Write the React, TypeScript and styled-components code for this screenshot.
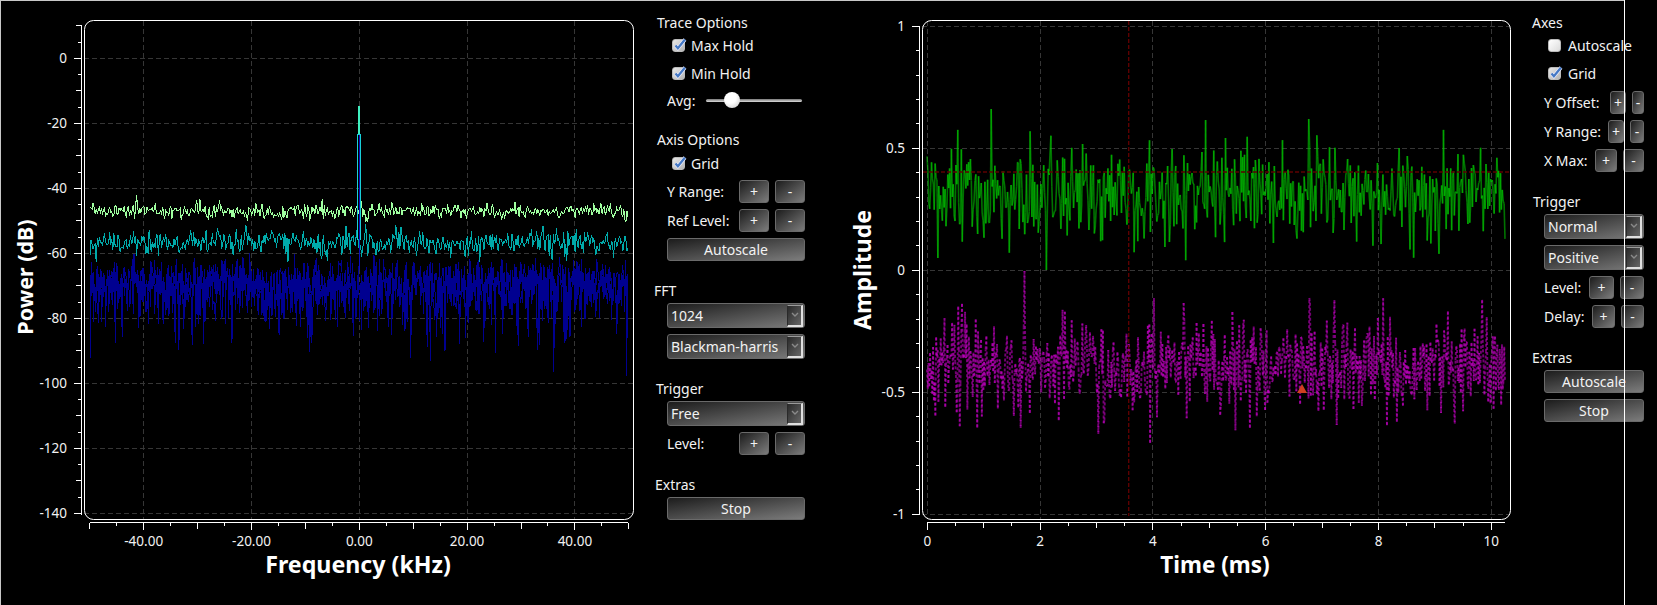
import React from "react";
import styled, { createGlobalStyle } from "styled-components";

const GlobalStyle = createGlobalStyle`
    html, body {
        margin: 0;
        background: #000;
    }
    body {
        font-family: "Noto Sans", "Open Sans", sans-serif;
        font-size: 14px;
        color: #f2f2f2;
    }
`;

const Window = styled.div`
    position: relative;
    display: flex;
    align-items: flex-start;
    width: 1657px;
    height: 605px;
    overflow: hidden;
    box-shadow: inset 1px 1px 0 #c8c8c8;

    &::after {
        content: "";
        position: absolute;
        left: 1624px;
        top: 0;
        bottom: 0;
        width: 1px;
        background: #fff;
    }
    &::before {
        content: "";
        position: absolute;
        left: 1625px;
        right: 0;
        top: 0;
        height: 1px;
        background: #000;
    }
`;

const ChartSvg = styled.svg`
    display: block;
    flex: none;
`;

const TickLabel = styled.text`
    font-size: 13.5px;
    fill: #f2f2f2;
`;

const AxisTitle = styled.text<{ $size: number }>`
    font-size: ${(p) => p.$size}px;
    font-weight: 700;
    fill: #fff;
`;

const Panel = styled.div<{ $w: number; $rowX: number }>`
    flex: none;
    display: flex;
    flex-direction: column;
    gap: 21px;
    width: ${(p) => p.$w}px;
    padding-top: 14px;
    --row-x: ${(p) => p.$rowX}px;
`;

const Group = styled.div<{ $rowW: number }>`
    display: flex;
    flex-direction: column;
    --row-w: ${(p) => p.$rowW}px;
`;

const GroupTitle = styled.div<{ $x: number }>`
    height: 18px;
    line-height: 18px;
    padding-left: ${(p) => p.$x}px;
    white-space: nowrap;
`;

const Row = styled.div<{ $mt?: number }>`
    display: flex;
    align-items: center;
    flex: none;
    gap: 6px;
    height: 23px;
    width: var(--row-w);
    margin-left: var(--row-x);
    margin-top: ${(p) => p.$mt ?? 6}px;
`;

const RowLabel = styled.span`
    flex: 1;
    white-space: nowrap;
`;

const Button = styled.button<{ $w?: number }>`
    flex: ${(p) => (p.$w ? "none" : "1")};
    width: ${(p) => (p.$w ? `${p.$w}px` : "auto")};
    height: 23px;
    padding: 0;
    border: 1px solid #6a6a6a;
    border-radius: 3px;
    background: linear-gradient(to bottom right, #1c1c1c, #7c7c7c);
    color: #f2f2f2;
    font: inherit;
    line-height: 19px;
`;

const ComboBox = styled.div<{ $mt?: number }>`
    display: flex;
    align-items: center;
    justify-content: space-between;
    flex: none;
    box-sizing: border-box;
    width: var(--row-w);
    height: 25px;
    margin-left: var(--row-x);
    margin-top: ${(p) => p.$mt ?? 6}px;
    padding: 0 1px 0 3px;
    border: 1px solid #6a6a6a;
    border-radius: 3px;
    background: linear-gradient(to bottom right, #1c1c1c, #7c7c7c);
`;

const ComboArrow = styled.span`
    display: flex;
    align-items: center;
    justify-content: center;
    box-sizing: border-box;
    width: 16px;
    height: 22px;
    border: 2px solid #e0e0e0;
    border-top: 1px solid #9a9a9a;
    border-left: 1px solid #2a2a2a;
    background: linear-gradient(to bottom right, #2a2a2a, #666);
`;

const CheckRow = styled.label<{ $mt?: number; $x: number; $gap: number }>`
    display: flex;
    align-items: center;
    flex: none;
    gap: ${(p) => p.$gap}px;
    height: 20px;
    margin-left: var(--row-x);
    margin-top: ${(p) => p.$mt ?? 8}px;
    padding-left: ${(p) => p.$x}px;
    white-space: nowrap;
`;

const CheckBox = styled.span<{ $on: boolean }>`
    position: relative;
    flex: none;
    box-sizing: border-box;
    width: 13px;
    height: 13px;
    border: 1px solid #bbb;
    border-radius: 3px;
    background: ${(p) => (p.$on ? "linear-gradient(to bottom right, #e8e8e8, #b4b4b4)" : "linear-gradient(to bottom right, #fff, #dcdcdc)")};
`;

const CheckMark = styled.svg`
    position: absolute;
    left: 0;
    top: -2px;
    overflow: visible;
`;

const SliderRow = styled.div`
    display: flex;
    align-items: center;
    flex: none;
    height: 20px;
    width: var(--row-w);
    margin-left: var(--row-x);
    margin-top: 7px;
`;

const SliderLabel = styled.span`
    flex: none;
    width: 39px;
`;

const SliderTrack = styled.div`
    position: relative;
    flex: none;
    width: 96px;
    height: 3px;
    border-radius: 2px;
    background: linear-gradient(#777, #ddd);
`;

const SliderHandle = styled.div<{ $left: number }>`
    position: absolute;
    left: ${(p) => p.$left}px;
    top: -7px;
    width: 16px;
    height: 16px;
    border-radius: 50%;
    background: radial-gradient(circle at 40% 35%, #fff 40%, #c4c4c4);
`;

// seeded so the noise comes out the same on every load
function makeRandom(seed: number) {
    let s = seed;
    return () => {
        s = (s + 0x6d2b79f5) | 0;
        let t = Math.imul(s ^ (s >>> 15), 1 | s);
        t = (t + Math.imul(t ^ (t >>> 7), 61 | t)) ^ t;
        return ((t ^ (t >>> 14)) >>> 0) / 4294967296;
    };
}

function gaussian(rand: () => number) {
    const g = Math.sqrt(-2 * Math.log(rand() + 1e-9)) * Math.cos(2 * Math.PI * rand());
    return Math.max(-2.9, Math.min(2.9, g));
}

type Pt = [number, number];

function noiseTrace(seed: number, x0: number, x1: number, n: number, sample: (r: () => number) => number) {
    const rand = makeRandom(seed);
    const pts: Pt[] = [];
    for (let i = 0; i < n; i++) {
        pts.push([x0 + ((x1 - x0) * i) / (n - 1), sample(rand)]);
    }
    return pts;
}

function pin(pts: Pt[], pins: Pt[]) {
    pins.forEach(([x, y]) => {
        let best = 0;
        pts.forEach((p, i) => {
            if (Math.abs(p[0] - x) < Math.abs(pts[best][0] - x)) best = i;
        });
        pts[best][1] = y;
    });
    return pts;
}

const toPoints = (pts: Pt[]) => pts.map((p) => `${p[0].toFixed(1)},${p[1].toFixed(1)}`).join(" ");

const DB_Y = (db: number) => 58.3 - db * 3.25;

const maxHold = pin(
    noiseTrace(11, 90, 628, 520, (r) => 211 + gaussian(r) * 3.7),
    [[137, 195], [200, 199], [220, 200], [322, 199]]
);
const minHold = pin(
    noiseTrace(23, 90, 628, 520, (r) => 242 + gaussian(r) * 6.6),
    [[96, 262], [288, 262], [366, 224], [480, 262]]
);

function averageTrace(seed: number, n: number) {
    return noiseTrace(seed, 90, 628, n, (r) => {
        const mag = Math.sqrt(-2 * Math.log(r() + 1e-9));
        return DB_Y(-71 + 20 * Math.log10(mag) * 0.95);
    });
}
const averageA = averageTrace(37, 1024);
const averageB = averageTrace(41, 600);

const amp = (v: number) => 270.3 - v * 244;

const channelA = pin(
    noiseTrace(51, 927, 1505, 640, (r) => amp(0.3 + gaussian(r) * 0.095)),
    [[991, 109], [1046, 270], [938, 258], [1309, 119], [1206, 120], [1165, 247]]
);
const channelB = pin(
    noiseTrace(67, 927, 1505, 760, (r) => amp(-0.39 + gaussian(r) * 0.095)),
    [[1024.7, 271], [1150, 443], [1184, 303], [1309, 298], [1098, 434], [1250, 428]]
);

const spectrumYTicks = Array.from({ length: 31 }, (_, i) => 10 - i * 5).map((db) => ({
    at: DB_Y(db),
    len: db % 20 === 0 ? 8 : db % 10 === 0 ? 6 : 4,
    label: db % 20 === 0 ? String(db) : "",
}));
const spectrumXTicks = Array.from({ length: 21 }, (_, i) => -50 + i * 5).map((khz) => ({
    at: 359.3 + khz * 5.39,
    len: khz % 20 === 0 ? 7 : khz % 10 === 0 ? 6 : 3,
    label: khz % 20 === 0 && khz !== 0 ? `${khz}.00` : khz === 0 ? "0.00" : "",
}));
const timeYTicks = Array.from({ length: 21 }, (_, i) => 10 - i).map((n) => ({
    at: amp(n / 10),
    len: n % 5 === 0 ? 8 : 4,
    label: n % 5 === 0 ? String(n / 10) : "",
}));
const timeXTicks = Array.from({ length: 21 }, (_, i) => i / 2).map((ms) => ({
    at: 927.3 + ms * 56.4,
    len: ms % 2 === 0 ? 7 : ms % 1 === 0 ? 5 : 3,
    label: ms % 2 === 0 ? String(ms) : "",
}));

type Tick = { at: number; len: number; label: string };

type ChartProps = {
    left: number;
    width: number;
    canvasX: [number, number];
    axisX: number;
    axisEnd: number;
    labelX: number;
    yTicks: Tick[];
    xTicks: Tick[];
    yTitle: string;
    yTitleSize: number;
    yTitleX: number;
    yTitleY: number;
    xTitle: string;
    xTitleSize: number;
    xTitleX: number;
    children: React.ReactNode;
};

function Chart(p: ChartProps) {
    const [cx0, cx1] = p.canvasX;
    const gridY = p.yTicks.filter((t) => t.label);
    const gridX = p.xTicks.filter((t) => t.label);
    return (
        <ChartSvg width={p.width} height={605} viewBox={`${p.left} 0 ${p.width} 605`}>
            <g stroke="#363636" strokeDasharray="5 3" shapeRendering="crispEdges">
                {gridY.map((t) => (
                    <line key={t.at} x1={cx0} x2={cx1} y1={t.at} y2={t.at} />
                ))}
                {gridX.map((t) => (
                    <line key={t.at} x1={t.at} x2={t.at} y1={21} y2={519} />
                ))}
            </g>
            {p.children}
            <rect x={cx0 + 0.5} y={20.5} width={cx1 - cx0} height={499} rx={9} fill="none" stroke="#fff" />
            <g stroke="#fff" shapeRendering="crispEdges">
                <line x1={p.axisX} x2={p.axisX} y1={p.yTicks[0].at} y2={514.5} />
                {p.yTicks.map((t) => (
                    <line key={t.at} x1={p.axisX - t.len} x2={p.axisX} y1={t.at} y2={t.at} />
                ))}
                <line x1={p.xTicks[0].at} x2={p.axisEnd} y1={522.5} y2={522.5} />
                {p.xTicks.map((t) => (
                    <line key={t.at} x1={t.at} x2={t.at} y1={522.5} y2={522.5 + t.len} />
                ))}
            </g>
            {gridY.map((t) => (
                <TickLabel key={t.at} x={p.labelX} y={t.at + 5} textAnchor="end">
                    {t.label}
                </TickLabel>
            ))}
            {gridX.map((t) => (
                <TickLabel key={t.at} x={t.at} y={546} textAnchor="middle">
                    {t.label}
                </TickLabel>
            ))}
            <AxisTitle $size={p.yTitleSize} transform={`translate(${p.yTitleX} ${p.yTitleY}) rotate(-90)`} textAnchor="middle">
                {p.yTitle}
            </AxisTitle>
            <AxisTitle $size={p.xTitleSize} x={p.xTitleX} y={573} textAnchor="middle">
                {p.xTitle}
            </AxisTitle>
        </ChartSvg>
    );
}

function Segments({ pts, color, opacity, width, dash }: { pts: Pt[]; color: string; opacity: number; width: number; dash?: string }) {
    return (
        <g stroke={color} strokeOpacity={opacity} strokeWidth={width} strokeDasharray={dash}>
            {pts.slice(1).map((p, i) => (
                <line key={i} x1={pts[i][0]} y1={pts[i][1]} x2={p[0]} y2={p[1]} />
            ))}
        </g>
    );
}

function Check({ label, checked = true, x, gap = 6, mt }: { label: string; checked?: boolean; x: number; gap?: number; mt?: number }) {
    return (
        <CheckRow $x={x} $gap={gap} $mt={mt}>
            <CheckBox $on={checked}>
                {checked && (
                    <CheckMark width="13" height="13" viewBox="0 0 13 13" fill="none">
                        <path d="M2.5 7.5l2.4 2.8L12 1.5" stroke="#eef" strokeWidth="3.6" />
                        <path d="M2.5 7.5l2.4 2.8L12 1.5" stroke="#4478c4" strokeWidth="2.3" />
                    </CheckMark>
                )}
            </CheckBox>
            {label}
        </CheckRow>
    );
}

function Combo({ value, mt }: { value: string; mt?: number }) {
    return (
        <ComboBox $mt={mt}>
            {value}
            <ComboArrow>
                <svg width="8" height="6" viewBox="0 0 8 6" fill="none">
                    <path d="M1 1l3 3 3-3" stroke="#8a8a8a" strokeWidth="1.4" />
                </svg>
            </ComboArrow>
        </ComboBox>
    );
}

function Stepper({ label, plus, minus, mt }: { label: string; plus: number; minus: number; mt?: number }) {
    return (
        <Row $mt={mt}>
            <RowLabel>{label}</RowLabel>
            <Button $w={plus}>+</Button>
            <Button $w={minus}>-</Button>
        </Row>
    );
}

function FftPanel() {
    return (
        <Panel $w={190} $rowX={17}>
            <Group $rowW={138}>
                <GroupTitle $x={7}>Trace Options</GroupTitle>
                <Check label="Max Hold" x={5} mt={3} />
                <Check label="Min Hold" x={5} />
                <SliderRow>
                    <SliderLabel>Avg:</SliderLabel>
                    <SliderTrack>
                        <SliderHandle $left={18} />
                    </SliderTrack>
                </SliderRow>
            </Group>
            <Group $rowW={138}>
                <GroupTitle $x={7}>Axis Options</GroupTitle>
                <Check label="Grid" x={5} mt={4} />
                <Stepper label="Y Range:" plus={30} minus={30} mt={7} />
                <Stepper label="Ref Level:" plus={30} minus={30} />
                <Row>
                    <Button>Autoscale</Button>
                </Row>
            </Group>
            <Group $rowW={138}>
                <GroupTitle $x={4}>FFT</GroupTitle>
                <Combo value="1024" mt={3} />
                <Combo value="Blackman-harris" />
            </Group>
            <Group $rowW={138}>
                <GroupTitle $x={6}>Trigger</GroupTitle>
                <Combo value="Free" mt={3} />
                <Stepper label="Level:" plus={30} minus={30} />
            </Group>
            <Group $rowW={138}>
                <GroupTitle $x={5}>Extras</GroupTitle>
                <Row $mt={3}>
                    <Button>Stop</Button>
                </Row>
            </Group>
        </Panel>
    );
}

function TimePanel() {
    return (
        <Panel $w={133} $rowX={20}>
            <Group $rowW={100}>
                <GroupTitle $x={8}>Axes</GroupTitle>
                <Check label="Autoscale" checked={false} x={4} gap={7} mt={3} />
                <Check label="Grid" x={4} gap={7} />
                <Stepper label="Y Offset:" plus={16} minus={12} mt={8} />
                <Stepper label="Y Range:" plus={16} minus={14} />
                <Stepper label="X Max:" plus={22} minus={21} />
            </Group>
            <Group $rowW={100}>
                <GroupTitle $x={9}>Trigger</GroupTitle>
                <Combo value="Normal" mt={3} />
                <Combo value="Positive" />
                <Stepper label="Level:" plus={25} minus={24} />
                <Stepper label="Delay:" plus={23} minus={23} />
            </Group>
            <Group $rowW={100}>
                <GroupTitle $x={8}>Extras</GroupTitle>
                <Row $mt={3}>
                    <Button>Autoscale</Button>
                </Row>
                <Row>
                    <Button>Stop</Button>
                </Row>
            </Group>
        </Panel>
    );
}

export default function App() {
    return (
        <>
            <GlobalStyle />
            <Window>
                <Chart
                    left={0}
                    width={650}
                    canvasX={[84, 633]}
                    axisX={81.5}
                    axisEnd={628}
                    labelX={67}
                    yTicks={spectrumYTicks}
                    xTicks={spectrumXTicks}
                    yTitle="Power (dB)"
                    yTitleSize={21.5}
                    yTitleX={33}
                    yTitleY={277}
                    xTitle="Frequency (kHz)"
                    xTitleSize={23.2}
                    xTitleX={358}
                >
                    <g fill="none" shapeRendering="crispEdges">
                        <polyline points={toPoints(averageA)} stroke="#000090" />
                        <polyline points={toPoints(averageB)} stroke="#000090" />
                        <polyline points={toPoints(minHold)} stroke="#00aaaa" />
                        <polyline points={toPoints(maxHold)} stroke="#a0ffa0" />
                        <path d="M359.5 270V134" stroke="#0a0ac0" />
                        <path d="M357.5 240V134h3V240" stroke="#18d0d8" />
                        <path d="M359 134V106" stroke="#40f0c0" strokeWidth="2" />
                    </g>
                </Chart>
                <FftPanel />
                <Chart
                    left={840}
                    width={684}
                    canvasX={[922, 1510]}
                    axisX={919.5}
                    axisEnd={1505}
                    labelX={905}
                    yTicks={timeYTicks}
                    xTicks={timeXTicks}
                    yTitle="Amplitude"
                    yTitleSize={23}
                    yTitleX={871}
                    yTitleY={270}
                    xTitle="Time (ms)"
                    xTitleSize={22.5}
                    xTitleX={1215}
                >
                    <Segments pts={channelA} color="#00d000" opacity={0.55} width={1.6} />
                    <Segments pts={channelB} color="#d000d0" opacity={0.55} width={1.9} dash="3 2" />
                    <g stroke="#5e0000" strokeWidth="1.4" strokeDasharray="4 2">
                        <line x1="923" x2="1510" y1="172" y2="172" />
                        <line x1="1128.7" x2="1128.7" y1="21" y2="516" />
                    </g>
                    <path d="M1302 384l5 9h-10z" fill="#d04020" />
                </Chart>
                <TimePanel />
            </Window>
        </>
    );
}
